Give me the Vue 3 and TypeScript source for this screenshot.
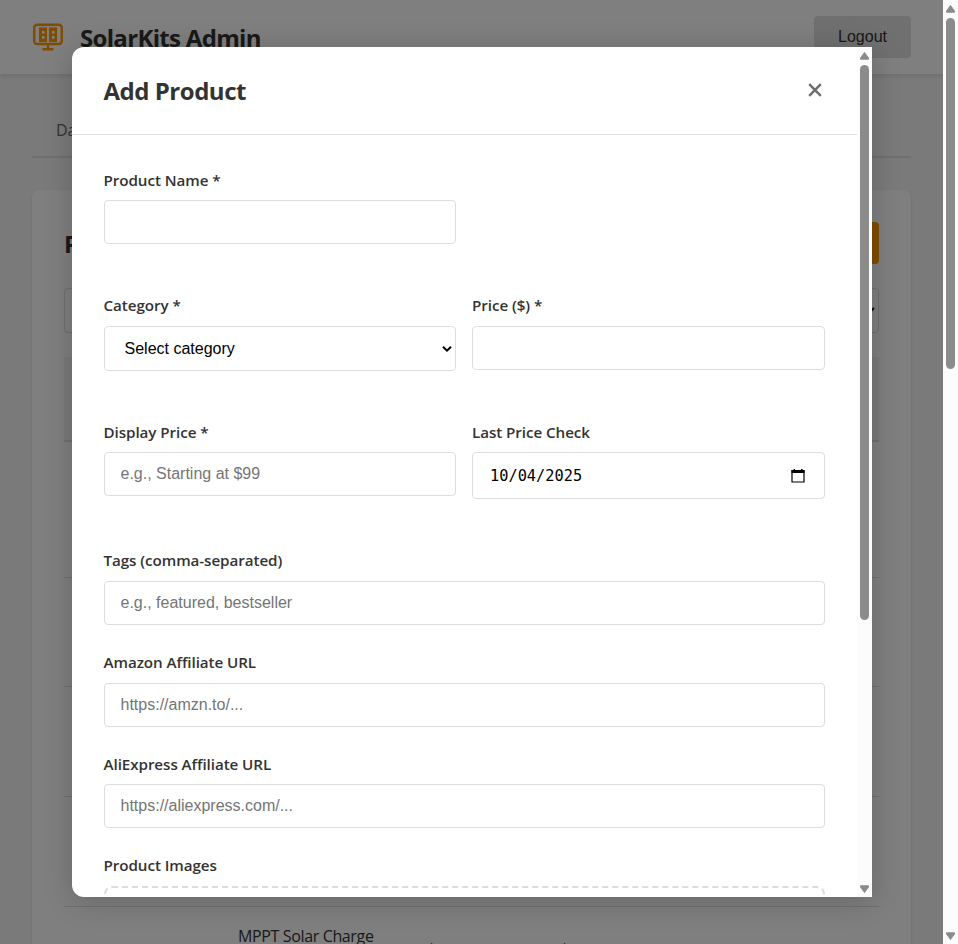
<script setup lang="ts">
import { ref } from 'vue'

interface Field {
  id: string
  label: string
  kind: 'text' | 'select' | 'date'
  placeholder?: string
}

const rows: Field[][] = [
  [{ id: 'name', label: 'Product Name *', kind: 'text' }],
  [
    { id: 'category', label: 'Category *', kind: 'select' },
    { id: 'price', label: 'Price ($) *', kind: 'text' },
  ],
  [
    { id: 'display', label: 'Display Price *', kind: 'text', placeholder: 'e.g., Starting at $99' },
    { id: 'checked', label: 'Last Price Check', kind: 'date' },
  ],
]
const wide: Field[] = [
  { id: 'tags', label: 'Tags (comma-separated)', kind: 'text', placeholder: 'e.g., featured, bestseller' },
  { id: 'amazon', label: 'Amazon Affiliate URL', kind: 'text', placeholder: 'https://amzn.to/...' },
  { id: 'ali', label: 'AliExpress Affiliate URL', kind: 'text', placeholder: 'https://aliexpress.com/...' },
]
const values = ref<Record<string, string>>({})
const date = '10/04/2025'
const emptyRows = [1, 2, 3, 4]
</script>

<template>
  <div class="screen">
    <div class="page">
      <header class="topbar">
        <div class="brand">
          <svg class="logo" width="32" height="32" viewBox="0 0 32 32" fill="none">
            <rect x="2.2" y="3.700" width="27.600" height="19.300" rx="3" stroke="#ff9800" stroke-width="2.400" />
            <path fill="#ff9800" fill-rule="evenodd" d="M7 6.500h8v14.500H7zM17 6.500h8v14.500h-8zM10 10v2.800h2.500V10zM10 15v2.800h2.500V15zM20 10v2.800h2.500V10zM20 15v2.800h2.500V15z" />
            <path d="M16 23v5M10.500 28.200h11" stroke="#ff9800" stroke-width="2.400" />
          </svg>
          <h1>SolarKits Admin</h1>
        </div>
        <button class="logout">Logout</button>
      </header>
      <main class="content">
        <nav class="tabs"><span class="tab">Dashboard</span></nav>
        <section class="card">
          <div class="card-head">
            <h2>Products</h2>
            <button class="add">Add Product</button>
          </div>
          <div class="filter">
            <svg width="12" height="12" viewBox="0 0 12 12"><path d="M2 3l4 4 4-4" fill="none" stroke="#000" stroke-width="2" /></svg>
          </div>
          <div class="thead"></div>
          <div v-for="r in emptyRows" :key="r" class="trow" :class="{ first: r === 1 }"></div>
          <div class="item">
            <span class="item-name">MPPT Solar Charge<br />Controller</span>
            <span>$</span>
            <span>$</span>
          </div>
        </section>
      </main>
    </div>
    <div class="scrollbar">
      <svg width="9" height="8" viewBox="0 0 9 8"><path d="M4.500.5L8.500 6v1.200h-8V6z" fill="#8b8b8b" stroke="#8b8b8b" stroke-linejoin="round" /></svg>
      <div class="thumb page-thumb"></div>
      <svg class="down" width="9" height="8" viewBox="0 0 9 8"><path d="M4.500 7.500L8.500 2V.8h-8V2z" fill="#8b8b8b" stroke="#8b8b8b" stroke-linejoin="round" /></svg>
    </div>

    <div class="overlay">
      <div class="modal">
        <div class="modal-main">
          <div class="modal-head">
            <h2>Add Product</h2>
            <button class="close" aria-label="Close">
              <svg width="16" height="16" viewBox="0 0 16 16"><path d="M2.200 2.200l11.600 11.600M13.800 2.200L2.200 13.800" stroke="#6e6e6e" stroke-width="2.500" /></svg>
            </button>
          </div>
          <form class="form" @submit.prevent>
            <div v-for="(row, i) in rows" :key="i" class="row">
              <div v-for="f in row" :key="f.id" class="group">
                <label :for="f.id">{{ f.label }}</label>
                <div v-if="f.kind === 'select'" :id="f.id" class="control select">
                  <span>Select category</span>
                  <svg width="12" height="8" viewBox="0 0 12 8"><path d="M2 1.700l4 4 4-4" fill="none" stroke="#000" stroke-width="2" /></svg>
                </div>
                <div v-else-if="f.kind === 'date'" :id="f.id" class="control date">
                  <span>{{ date }}</span>
                  <svg width="14" height="16" viewBox="0 0 14 16"><path d="M1 2.500h12v11.500H1z" fill="none" stroke="#000" stroke-width="1.200" /><path d="M.5 2h13v3H.5zM2.500 1h1.500v2H2.500zM10 1h1.500v2H10z" /></svg>
                </div>
                <input v-else :id="f.id" v-model="values[f.id]" class="control" :placeholder="f.placeholder" />
              </div>
            </div>
            <div v-for="f in wide" :key="f.id" class="group">
              <label :for="f.id">{{ f.label }}</label>
              <input :id="f.id" v-model="values[f.id]" class="control" :placeholder="f.placeholder" />
            </div>
            <div class="group">
              <label>Product Images</label>
              <div class="dropzone"></div>
            </div>
          </form>
        </div>
        <div class="scrollbar modal-bar">
          <svg width="9" height="8" viewBox="0 0 9 8"><path d="M4.500.5L8.500 6v1.200h-8V6z" fill="#8b8b8b" stroke="#8b8b8b" stroke-linejoin="round" /></svg>
          <div class="thumb modal-thumb"></div>
          <svg class="down" width="9" height="8" viewBox="0 0 9 8"><path d="M4.500 7.500L8.500 2V.8h-8V2z" fill="#8b8b8b" stroke="#8b8b8b" stroke-linejoin="round" /></svg>
        </div>
      </div>
    </div>
  </div>
</template>

<style>
body {
  margin: 0;
  overflow: hidden;
}
</style>

<style scoped>
* {
  box-sizing: border-box;
}
.screen {
  position: relative;
  display: flex;
  width: 958px;
  height: 944px;
  overflow: hidden;
  font-family: 'Segoe UI', 'Open Sans', 'Noto Sans', sans-serif;
  font-size: 16px;
  line-height: 1.6;
  color: #333;
}
h1,
h2 {
  margin: 0;
  font-weight: 700;
}
.page {
  width: 943px;
  height: 944px;
  overflow: hidden;
  background: #f5f5f5;
}
.topbar {
  display: flex;
  align-items: center;
  justify-content: space-between;
  height: 74px;
  padding: 0 32px;
  background: #fff;
  box-shadow: 0 2px 4px rgba(0, 0, 0, 0.1);
}
.brand {
  display: flex;
  align-items: center;
  gap: 16px;
}
.brand h1 {
  padding-top: 3px;
  font-size: 24px;
  letter-spacing: -0.68px;
}
button {
  border: 0;
  font: 16px 'Liberation Sans', Arial, sans-serif;
}
.logout {
  width: 97px;
  height: 42px;
  border-radius: 4px;
  background: #e0e0e0;
  color: #333;
}
.content {
  padding: 32px;
}
.tabs {
  display: flex;
  height: 52px;
  padding: 12px 24px 0;
  border-bottom: 2px solid #e0e0e0;
  color: #666;
}
.card {
  height: 900px;
  margin-top: 32px;
  padding: 32px;
  border-radius: 8px;
  background: #fff;
  box-shadow: 0 2px 4px rgba(0, 0, 0, 0.1);
}
.card-head {
  display: flex;
  align-items: center;
  justify-content: space-between;
  height: 42px;
}
.card-head h2 {
  padding-top: 2px;
  font-size: 24px;
}
.add {
  width: 140px;
  height: 42px;
  border-radius: 4px;
  background: #ff9800;
  color: #fff;
}
.filter {
  display: flex;
  align-items: center;
  justify-content: flex-end;
  height: 45px;
  margin: 24px 0;
  padding-right: 2px;
  border: 1px solid #ddd;
  border-radius: 4px;
}
.thead {
  height: 85px;
  border-bottom: 2px solid #e0e0e0;
  background: #f5f5f5;
}
.trow {
  height: 110px;
  border-bottom: 1px solid #e0e0e0;
}
.trow.first {
  height: 136px;
}
.trow.first + .trow {
  height: 109px;
}
.item {
  display: grid;
  grid-template-columns: 189px 133px 1fr;
  align-items: center;
  padding: 17px 0 17px 174px;
}
.item-name {
  white-space: nowrap;
  letter-spacing: -0.36px;
}
.scrollbar {
  display: flex;
  flex-direction: column;
  align-items: center;
  width: 15px;
  padding: 5px 0 4px;
  background: #fcfcfc;
}
.thumb {
  width: 9px;
  border-radius: 5px;
  background: #8b8b8b;
}
.page-thumb {
  height: 351px;
  margin-top: 5px;
}
.down {
  margin-top: auto;
}
.overlay {
  position: absolute;
  inset: 0 15px 0 0;
  display: flex;
  align-items: center;
  justify-content: center;
  background: rgba(0, 0, 0, 0.5);
}
.modal {
  display: flex;
  width: 800px;
  height: 849.600px;
  overflow: hidden;
  border-radius: 12px 0 0 12px;
  background: #fff;
  box-shadow: 0 4px 30px rgba(0, 0, 0, 0.2);
}
.modal-main {
  flex: 1;
}
.modal-bar {
  background: #fcfcfc;
}
.modal-thumb {
  height: 555px;
  margin-top: 5px;
}
.modal-head {
  display: flex;
  align-items: center;
  justify-content: space-between;
  height: 87.600px;
  padding: 0 34px 0 32px;
  border-bottom: 1px solid #e0e0e0;
}
.modal-head h2 {
  padding-top: 2px;
  font-size: 24px;
  letter-spacing: -0.48px;
}
.close {
  display: flex;
  margin-bottom: 1px;
  padding: 0;
  background: none;
}
.form {
  padding: 32px;
}
.row {
  display: grid;
  grid-template-columns: 1fr 1fr;
  gap: 16px;
  margin-bottom: 24px;
}
.group {
  margin-bottom: 24px;
}
label {
  display: block;
  height: 25.600px;
  margin-bottom: 8px;
  padding-top: 1px;
  font-size: 15.200px;
  font-weight: 600;
  letter-spacing: -0.07px;
  white-space: nowrap;
}
.control {
  display: flex;
  align-items: center;
  justify-content: space-between;
  width: 100%;
  height: 44px;
  padding: 0 16px;
  border: 1px solid #ddd;
  border-radius: 4px;
  background: #fff;
  color: #000;
  font: 16px 'Liberation Sans', Arial, sans-serif;
}
.control::placeholder {
  color: #757575;
}
.select {
  height: 44.800px;
  padding: 1px 2px 0 20px;
}
.date {
  height: 47.100px;
  padding: 1px 19px 0 17px;
  font: 15.300px 'DejaVu Sans Mono', monospace;
}
.dropzone {
  height: 160px;
  border: 2px dashed #ddd;
  border-radius: 8px;
}
</style>
